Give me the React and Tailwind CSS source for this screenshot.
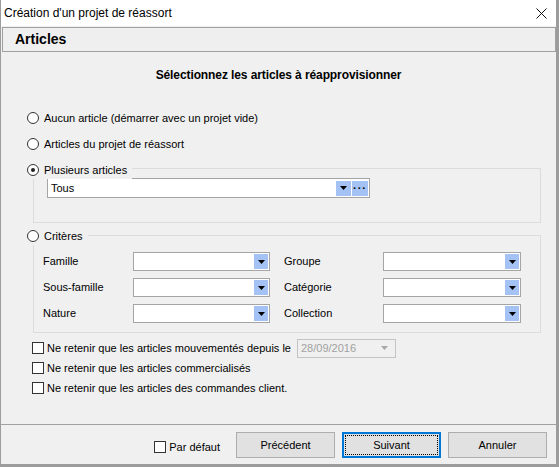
import { useState } from "react";

const ROWS = [
  ["Famille", "Groupe"],
  ["Sous-famille", "Catégorie"],
  ["Nature", "Collection"],
];

function Arrow({ color = "#000" }) {
  return (
    <svg width="7" height="4" viewBox="0 0 7 4">
      <path d="M0 0h7L3.5 4z" fill={color} />
    </svg>
  );
}

function Combo({ className, value = "" }) {
  return (
    <div className={`flex h-[19px] items-center border border-[#a5a5a5] bg-white pl-[3px] pr-[1px] ${className}`}>
      <span className="flex-1 truncate">{value}</span>
      <span className="flex h-[15px] w-[14px] items-center justify-center bg-[#a4c2f4]">
        <Arrow />
      </span>
    </div>
  );
}

function Radio({ checked, label, onClick }) {
  return (
    <div className="flex items-center gap-[5px] whitespace-nowrap cursor-default" onClick={onClick}>
      <span className="flex h-[12px] w-[12px] items-center justify-center rounded-full border border-[#333] bg-white">
        {checked && <span className="h-[4px] w-[4px] rounded-full bg-[#222]" />}
      </span>
      <span>{label}</span>
    </div>
  );
}

function Check({ label }) {
  const [on, setOn] = useState(false);
  return (
    <div className="flex items-center gap-[3px] whitespace-nowrap cursor-default" onClick={() => setOn(!on)}>
      <span className="flex h-[12px] w-[12px] items-center justify-center border border-[#333] bg-white text-[10px] leading-none">
        {on ? "✓" : ""}
      </span>
      <span>{label}</span>
    </div>
  );
}

function Button({ children, focused }) {
  return (
    <button
      className={`h-[26px] w-[99px] bg-[#e1e1e1] ${
        focused ? "border-2 border-[#0078d7] p-[1px]" : "border border-[#adadad] p-[2px]"
      }`}
    >
      <span className={`flex h-full w-full items-center justify-center ${focused ? "border border-dotted border-black" : ""}`}>
        {children}
      </span>
    </button>
  );
}

export default function App() {
  const [mode, setMode] = useState(2);

  return (
    <div className="flex h-[467px] w-[559px] flex-col border-b-[3px] border-l border-r-[3px] border-[#9c9c9c] bg-[#f0f0f0] font-['Liberation_Sans',Arial,sans-serif] text-[11px] text-black">
      {/* barre de titre */}
      <div className="flex h-[26px] items-center justify-between bg-white pl-[3px] pr-[6px] text-[12px]">
        <span>Création d'un projet de réassort</span>
        <svg width="11" height="11" viewBox="0 0 11 11" className="mr-[3px]">
          <path d="M0.5 0.5l10 10M10.5 0.5l-10 10" stroke="#111" strokeWidth="1" />
        </svg>
      </div>

      <div className="ml-[1px] mt-[1px] flex h-[25px] items-center border border-[#a0a0a0] bg-[#efefef] px-[12px] text-[14px] font-bold">
        Articles
      </div>

      <div className="flex-1">
        <div className="mt-[14px] h-[16px] text-center text-[12px] font-bold tracking-[-0.1px]">
          Sélectionnez les articles à réapprovisionner
        </div>

        <div className="ml-[26px] mt-[23px] flex h-[26px] items-center">
          <Radio checked={mode === 0} onClick={() => setMode(0)} label="Aucun article (démarrer avec un projet vide)" />
        </div>
        <div className="ml-[26px] flex h-[26px] items-center">
          <Radio checked={mode === 1} onClick={() => setMode(1)} label="Articles du projet de réassort" />
        </div>

        <div className="relative ml-[32px] mt-[11px] h-[55px] w-[508px] border border-[#dcdcdc] pl-[13px] pt-[9px]">
          <div className="absolute left-[-7px] top-[-7px] bg-[#f0f0f0] pr-[5px]">
            <Radio checked={mode === 2} onClick={() => setMode(2)} label="Plusieurs articles" />
          </div>
          <div className="flex h-[20px] w-[323px] items-center border border-[#a5a5a5] bg-white pl-[3px] pr-[1px]">
            <span className="flex-1">Tous</span>
            <span className="flex h-[15px] w-[15px] items-center justify-center bg-[#a4c2f4]">
              <Arrow />
            </span>
            <span className="ml-[1px] flex h-[15px] w-[16px] items-center justify-center bg-[#a4c2f4] text-[11px] font-bold leading-none tracking-[1px]">
              ···
            </span>
          </div>
        </div>

        <div className="relative ml-[32px] mt-[12px] h-[98px] w-[508px] border border-[#dcdcdc] pl-[9px] pt-[16px]">
          <div className="absolute left-[-7px] top-[-8px] bg-[#f0f0f0] pr-[5px]">
            <Radio checked={mode === 3} onClick={() => setMode(3)} label="Critères" />
          </div>
          <div className="grid grid-cols-[90px_137px_14px_99px_138px] gap-y-[7px]">
            {ROWS.map(([a, b]) => (
              <div key={a} className="contents">
                <span className="flex items-center">{a}</span>
                <Combo />
                <span />
                <span className="flex items-center">{b}</span>
                <Combo />
              </div>
            ))}
          </div>
        </div>

        <div className="ml-[31px] mt-[5px] flex flex-col">
          <div className="flex h-[20px] items-center">
            <div className="w-[265px]">
              <Check label="Ne retenir que les articles mouvementés depuis le" />
            </div>
            <div className="flex h-[19px] w-[99px] items-center justify-between border border-[#c4c4c4] bg-[#f0f0f0] pl-[3px] pr-[7px] text-[#a0a0a0]">
              <span>28/09/2016</span>
              <Arrow color="#a8a8a8" />
            </div>
          </div>
          <div className="flex h-[20px] items-center">
            <Check label="Ne retenir que les articles commercialisés" />
          </div>
          <div className="flex h-[20px] items-center">
            <Check label="Ne retenir que les articles des commandes client." />
          </div>
        </div>
      </div>

      <div className="flex h-[40px] items-start justify-end border-t border-[#a0a0a0] pr-[9px] pt-[7px]">
        <div className="mr-[16px] mt-[7px]">
          <Check label="Par défaut" />
        </div>
        <div className="flex gap-[7px]">
          <Button>Précédent</Button>
          <Button focused>Suivant</Button>
          <Button>Annuler</Button>
        </div>
      </div>
    </div>
  );
}
